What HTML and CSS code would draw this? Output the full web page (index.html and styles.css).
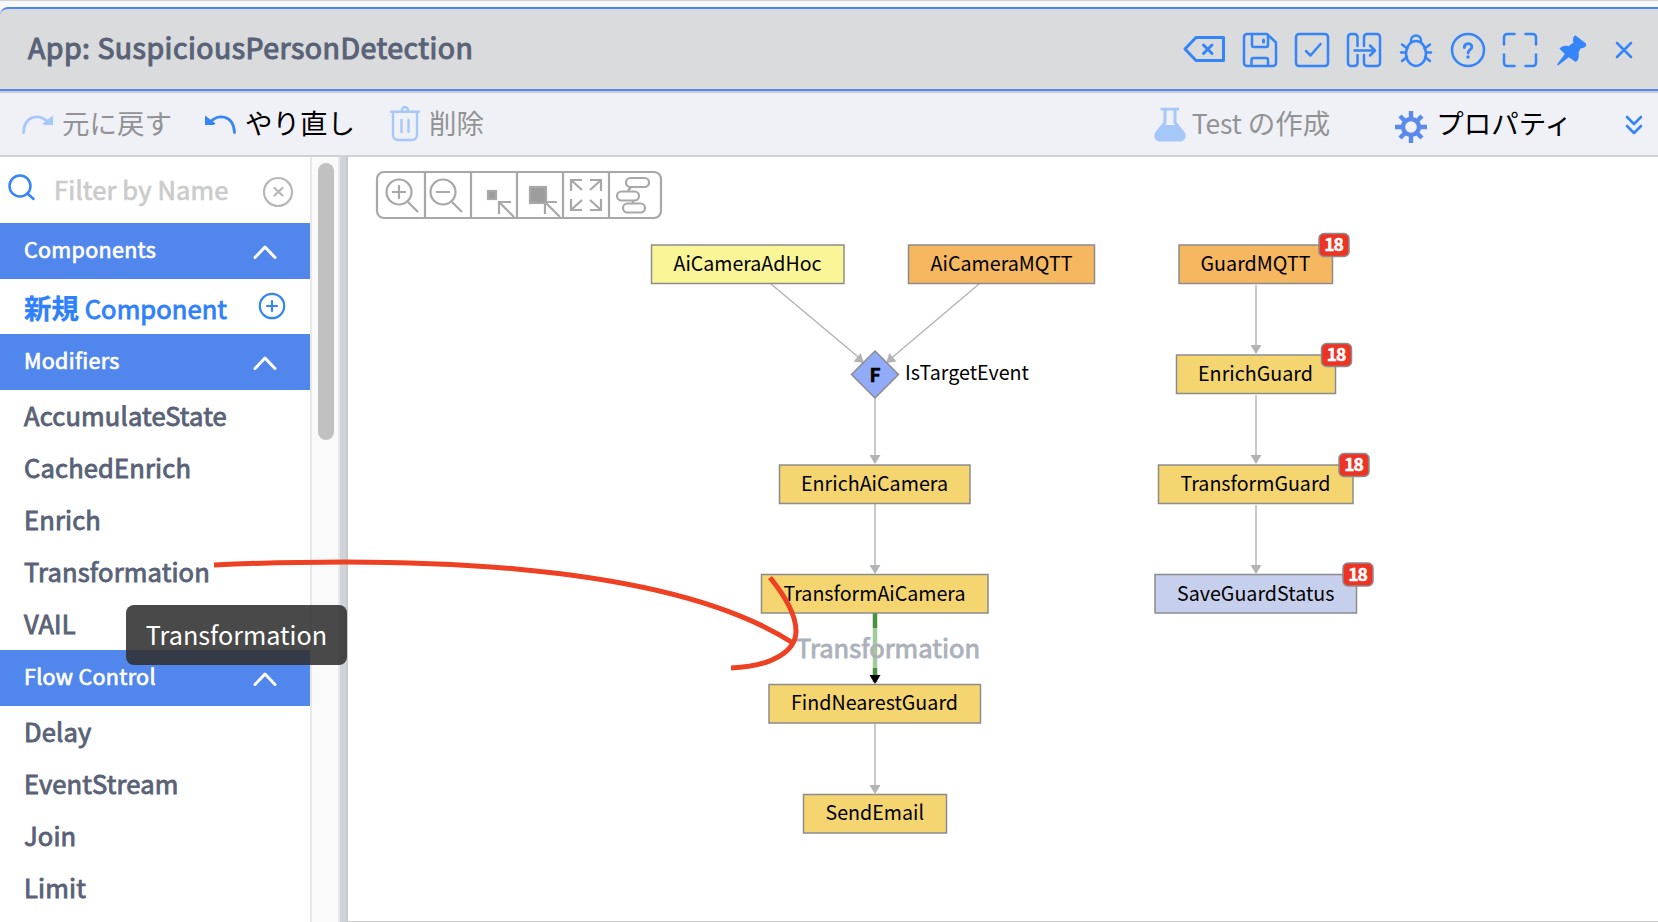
FILE: index.html
```html
<!DOCTYPE html>
<html lang="ja">
<head>
<meta charset="utf-8">
<title>App: SuspiciousPersonDetection</title>
<link rel="stylesheet" href="styles.css">
</head>
<body>
<div class="window">
  <header class="titlebar">
    <h1 class="title">App: SuspiciousPersonDetection</h1>
    <div class="actions">
      <svg class="icon i-del" width="44" height="36" viewBox="0 0 44 36"><path d="M14 6.5H41.5V29.5H14L3 18Z" stroke-width="3"/><path d="M21.500 14L30 22.500M30 14L21.500 22.500" stroke-width="3"/></svg>
      <svg class="icon" width="36" height="36" viewBox="0 0 36 36"><path d="M5 2H25L34 10.500V31a3 3 0 0 1-3 3H5a3 3 0 0 1-3-3V5a3 3 0 0 1 3-3ZM10 2V13a2 2 0 0 0 2 2H24a2 2 0 0 0 2-2V3M9.500 34V28a2 2 0 0 1 2-2H24a2 2 0 0 1 2 2V34"/><path d="M21.500 8V10" stroke-width="3"/></svg>
      <svg class="icon" width="36" height="36" viewBox="0 0 36 36"><rect x="2" y="2" width="32" height="32" rx="3"/><path d="M12 19L16.500 23.500L26.500 12"/></svg>
      <svg class="icon" width="36" height="36" viewBox="0 0 36 36"><path d="M11.500 14V5a3 3 0 0 0-3-3H5a3 3 0 0 0-3 3V31a3 3 0 0 0 3 3H8.500a3 3 0 0 0 3-3V23M18 14V5a3 3 0 0 1 3-3H31a3 3 0 0 1 3 3V31a3 3 0 0 1-3 3H21a3 3 0 0 1-3-3V23M8.500 18.500H28.500M24 13.500L29 18.500L24 23.500"/></svg>
      <svg class="icon" width="36" height="36" viewBox="0 0 36 36"><ellipse cx="18" cy="21.500" rx="10" ry="12.500"/><path d="M13 10V8.500a5 5 0 0 1 10 0V10M3 20.500H8M28 20.500H33M4 12.500L9.500 16.500M32 12.500L26.500 16.500M4 29L9 25M32 29L27 25"/></svg>
      <svg class="icon" width="36" height="36" viewBox="0 0 36 36"><circle cx="18" cy="18" r="16"/><path d="M14.300 15.500c0-5 7.500-5 7.500-.6c0 2.800-3.700 3-3.700 6.100" stroke-width="2.800"/><circle class="fill" cx="18" cy="25" r="1.700"/></svg>
      <svg class="icon" width="36" height="36" viewBox="0 0 36 36"><path d="M12.500 2H5a3 3 0 0 0-3 3V12.500M23.500 2H31a3 3 0 0 1 3 3V12.500M12.500 34H5a3 3 0 0 1-3-3V22.500M23.500 34H31a3 3 0 0 0 3-3V22.500"/></svg>
      <svg class="icon" width="36" height="36" viewBox="0 0 36 36"><path class="fill" d="M21.300 3.300L31.700 11.200C33.500 14.500 29.800 16.300 26.700 16.300L24.500 20.500C25.300 24.500 24.500 28.500 21.800 30L14.800 25.300L4 33.500C3.200 33.300 3 32.500 3.300 32L10.800 22L5.500 16.800C6.500 14.800 10.500 12.800 14.500 14.200L19.500 10.500C18.300 7.500 19 4.500 21.300 3.300Z"/></svg>
      <svg class="icon i-close" width="36" height="36" viewBox="0 0 36 36"><path d="M11 11L25 25M25 11L11 25"/></svg>
    </div>
  </header>

  <div class="toolbar">
    <div class="tool undo off"><svg class="icon" width="36" height="24" viewBox="0 0 36 24"><path d="M3.500 20.500C4.500 2.500 21 1 28.500 11"/><path class="fill" d="M33 3.500V13H24.500L22.500 11.500Z"/></svg><span>元に戻す</span></div>
    <div class="tool redo"><svg class="icon" width="36" height="24" viewBox="0 0 36 24"><path d="M32.500 20.500C31.500 2.500 15 1 7.500 11"/><path class="fill" d="M3 3.500V13H11.500L13.500 11.500Z"/></svg><span>やり直し</span></div>
    <div class="tool trash off"><svg class="icon" width="32" height="36" viewBox="0 0 32 36"><path d="M2 5.800H30M4 7V29a5 5 0 0 0 5 5H23a5 5 0 0 0 5-5V7M13 5V4a3 3 0 0 1 6 0V5M12.500 14V26M19.500 14V26"/></svg><span>削除</span></div>
    <div class="spacer"></div>
    <div class="tool test off"><svg class="icon" width="34" height="36" viewBox="0 0 34 36"><path class="fill" d="M7.500 .8H26V3.500H23.500V15L31.500 25C34.500 30 31.500 34.500 27 34.500H7C2.500 34.500-.5 30 2.500 25L10.500 15V3.500H7.500ZM13.500 3.500V16L12 18H22L20.500 16V3.500Z" fill-rule="evenodd"/></svg><span><span class="latin">Test</span> の作成</span></div>
    <div class="tool props"><svg class="gear" width="34" height="34" viewBox="0 0 34 34"><circle cx="17" cy="17" r="8"/><path d="M17 8V1M17 26V33M8 17H1M26 17H33M10.500 10.500L6 6M23.500 10.500L28 6M10.500 23.500L6 28M23.500 23.500L28 28"/></svg><span>プロパティ</span></div>
    <svg class="icon more" width="20" height="24" viewBox="0 0 20 24"><path d="M3 5L10 12L17 5M3 14L10 21L17 14"/></svg>
  </div>

  <main class="main">
    <aside class="sidebar">
      <div class="filter">
        <svg class="icon search" width="30" height="30" viewBox="0 0 30 30"><circle cx="13" cy="13" r="10.500"/><path d="M20.500 20.500L26.500 26"/></svg>
        <span class="placeholder">Filter by Name</span>
        <svg class="clear" width="32" height="32" viewBox="0 0 32 32"><circle cx="16" cy="16" r="14"/><path d="M12.500 12L20.500 19.500M20.500 12L12.500 19.500"/></svg>
      </div>
      <div class="group"><span>Components</span><svg width="26" height="18" viewBox="0 0 26 18"><path d="M3 14.500L13 4L23 14.500"/></svg></div>
      <div class="new"><span><b>新規</b> <span class="nc">Component</span></span><svg class="icon" width="28" height="28" viewBox="0 0 28 28"><circle cx="14" cy="14" r="12.200"/><path d="M14 9V19M9 14H19"/></svg></div>
      <div class="group"><span>Modifiers</span><svg width="26" height="18" viewBox="0 0 26 18"><path d="M3 14.500L13 4L23 14.500"/></svg></div>
      <ul class="items"><li>AccumulateState</li><li>CachedEnrich</li><li>Enrich</li><li>Transformation</li><li>VAIL</li></ul>
      <div class="group"><span>Flow Control</span><svg width="26" height="18" viewBox="0 0 26 18"><path d="M3 14.500L13 4L23 14.500"/></svg></div>
      <ul class="items"><li>Delay</li><li>EventStream</li><li>Join</li><li>Limit</li></ul>
    </aside>
    <div class="scroll"><div class="thumb"></div></div>
    <div class="splitter"></div>
    <section class="canvas">
      <svg class="graph" width="1310" height="765" viewBox="348 157 1310 765">
        <defs>
          <g id="head"><path d="M-5.500 -9H5.500L0 0Z"/></g>
        </defs>
        <g class="palette">
          <rect x="377" y="172" width="284" height="46" rx="7"/>
          <path d="M425 172V218M471 172V218M517 172V218M563 172V218M609 172V218"/>
          <circle cx="399" cy="192" r="12.500"/><path d="M392 192H406M399 185V199M408 202L418 212"/>
          <circle cx="443" cy="192" r="12.500"/><path d="M436 192H450M452 202L462 212"/>
          <rect class="block" x="488" y="191" width="8" height="8"/><path d="M514 217L499 202M499 214V202H511"/>
          <rect class="block" x="530" y="187" width="16" height="16"/><path d="M560 217L545 202M545 214V202H557"/>
          <path d="M582 190L571 180M571 191V180H582M590 190L601 180M590 180H601V191M582 200L571 210M571 199V210H582M590 200L601 210M601 199V210H590"/>
          <rect x="626" y="178" width="23" height="9" rx="4.500"/><rect x="617" y="191.500" width="22" height="9" rx="4.500"/><rect x="623" y="203.500" width="22" height="9" rx="4.500"/><path d="M631 187L628 191M633 201V203"/>
        </g>
        <g class="edges">
          <path d="M771 284L863 361M979 284L888 361M875 398V463M875 504V573M875 724V793M1256 285V353M1256 395V463M1256 505V573"/>
        </g>
        <g class="heads">
          <use href="#head" transform="translate(864 363) rotate(-50)"/><use href="#head" transform="translate(886 363) rotate(50)"/>
          <use href="#head" x="875" y="464"/><use href="#head" x="875" y="574"/><use href="#head" x="875" y="794"/>
          <use href="#head" x="1256" y="354"/><use href="#head" x="1256" y="464"/><use href="#head" x="1256" y="574"/>
        </g>
        <path class="link" d="M875 613V682"/><use href="#head" x="875" y="684"/>
        <g class="nodes">
          <rect class="yellow" x="651.500" y="245" width="192.500" height="38.500"/>
          <rect class="orange" x="908.500" y="245" width="186" height="38.500"/>
          <path class="blue" d="M875 351L898.500 374.500L875 398L851.500 374.500Z"/>
          <rect class="gold" x="779.500" y="465" width="190.500" height="38.500"/>
          <rect class="gold" x="761.500" y="574.500" width="226.500" height="38.500"/>
          <rect class="gold" x="769" y="684.500" width="211.500" height="38.500"/>
          <rect class="gold" x="803.500" y="794.500" width="143" height="38.500"/>
          <rect class="orange" x="1179" y="245" width="153.500" height="38.500"/>
          <rect class="gold" x="1176.500" y="355" width="159" height="38.500"/>
          <rect class="gold" x="1158.500" y="465" width="194.500" height="38.500"/>
          <rect class="lilac" x="1155" y="574.500" width="201.500" height="38.500"/>
        </g>
        <g class="labels">
          <text x="673.500" y="271" textLength="148" lengthAdjust="spacingAndGlyphs">AiCameraAdHoc</text>
          <text x="930.500" y="271" textLength="142" lengthAdjust="spacingAndGlyphs">AiCameraMQTT</text>
          <text x="905" y="380" textLength="124" lengthAdjust="spacingAndGlyphs">IsTargetEvent</text>
          <text x="801" y="491" textLength="147" lengthAdjust="spacingAndGlyphs">EnrichAiCamera</text>
          <text x="783.500" y="601" textLength="182" lengthAdjust="spacingAndGlyphs">TransformAiCamera</text>
          <text x="791" y="710" textLength="167" lengthAdjust="spacingAndGlyphs">FindNearestGuard</text>
          <text x="825.500" y="820" textLength="98.500" lengthAdjust="spacingAndGlyphs">SendEmail</text>
          <text x="1200.500" y="271" textLength="110" lengthAdjust="spacingAndGlyphs">GuardMQTT</text>
          <text x="1198" y="381" textLength="115" lengthAdjust="spacingAndGlyphs">EnrichGuard</text>
          <text x="1180.500" y="491" textLength="150" lengthAdjust="spacingAndGlyphs">TransformGuard</text>
          <text x="1177" y="601" textLength="157.500" lengthAdjust="spacingAndGlyphs">SaveGuardStatus</text>
          <text class="f" x="869.500" y="381.500">F</text>
        </g>
        <g class="badges">
          <rect x="1319" y="233.500" width="30" height="23" rx="5"/><text x="1333.500" y="251">18</text>
          <rect x="1321.500" y="343.500" width="30" height="23" rx="5"/><text x="1336" y="361">18</text>
          <rect x="1339" y="453.500" width="30" height="23" rx="5"/><text x="1353.500" y="471">18</text>
          <rect x="1343" y="563" width="30" height="23" rx="5"/><text x="1357.500" y="581">18</text>
        </g>
        <rect class="veil" x="796" y="628" width="186" height="40"/>
        <text class="ghost" x="796" y="658" textLength="184" lengthAdjust="spacingAndGlyphs">Transformation</text>
      </svg>
    </section>
  </main>
  <svg class="stroke" width="1658" height="922" viewBox="0 0 1658 922"><path d="M214 565C380 557.500 660 557 793 643M770 577.500C785 596 796 614 796 631C796 650 775 666 731 668"/></svg>
  <div class="tooltip">Transformation</div>
</div>
</body>
</html>
```

FILE: styles.css
```css
* { box-sizing: border-box; }
body { margin: 0; font-family: "Noto Sans CJK JP", "Noto Sans", sans-serif; background: #fff; overflow: hidden; }
.window { position: relative; width: 1658px; height: 922px; display: flex; flex-direction: column; background: #f8f8fb; border-top: 1px solid #d2d3d8; padding-top: 6px; overflow: hidden; }
.titlebar { flex: none; height: 84px; display: flex; align-items: center; justify-content: space-between; background: #dadbdd; border: 2px solid #5187ec; border-left: 0; border-right: 0; border-top-left-radius: 8px; padding: 0 16px 0 28px; }
.title { margin: 0 0 5px; font-size: 28.5px; line-height: 40px; font-weight: 400; color: #596277; -webkit-text-stroke: 1.1px #596277; letter-spacing: .48px; white-space: nowrap; }
.actions { display: flex; align-items: center; gap: 16px; padding-top: 2px; }
.i-del { margin: 0 0 3px 0; }
.icon { flex: none; fill: none; stroke: #3584f8; stroke-width: 2.5; stroke-linecap: round; stroke-linejoin: round; }
.icon .fill { fill: #3584f8; stroke: none; }
.toolbar { flex: none; height: 66px; display: flex; align-items: center; background: #f0f1f7; border-top: 2px solid #c9cbd2; border-bottom: 2px solid #cfd1d8; padding: 0 14px 0 20px; font-size: 27.500px; line-height: 40px; color: #000; }
.tool { display: flex; align-items: center; white-space: nowrap; }
.tool > span { margin-bottom: 4px; }
.tool > svg { stroke-width: 2.800; }
.off { color: #929395; }
.off .icon { stroke: #a5c8f8; }
.off .icon .fill { fill: #a5c8f8; }
.undo { gap: 6px; width: 182px; }
.redo { gap: 7px; width: 187px; }
.trash { gap: 8px; }
.trash > svg { stroke-width: 2.400; }
.spacer { flex: 1; }
.test { gap: 5px; margin-right: 64px; }
.test > svg { margin-top: 2px; }
.latin { font-size: 26.500px; letter-spacing: -.2px; }
.props { gap: 8px; margin-right: 52px; }
.gear { margin-top: 5px; fill: none; stroke: #5a8bec; stroke-width: 4.200; }
.tool > .gear { stroke-width: 4.400; }
.more { stroke-width: 2.600; }
.main { flex: 1; min-height: 0; display: flex; background: #fff; }
.sidebar { width: 310px; overflow: hidden; }
.filter { height: 66px; display: flex; align-items: center; padding: 0 16px 0 7px; }
.search { margin-top: -5px; }
.placeholder { flex: 1; margin: 0 0 4px 17px; font-size: 25.500px; letter-spacing: .15px; color: #cbcbcb; -webkit-text-stroke: .7px #cbcbcb; white-space: nowrap; }
.clear { margin-top: 3px; fill: none; stroke: #b7b7b7; stroke-width: 2.200; stroke-linecap: round; }
.group { height: 56px; display: flex; align-items: center; justify-content: space-between; padding: 0 32px 4px 24px; background: #5187ec; color: #fff; font-size: 21.500px; letter-spacing: .3px; -webkit-text-stroke: .7px #fff; }
.group span { margin-bottom: 1px; }
.group svg { margin-top: 5px; fill: none; stroke: #fff; stroke-width: 3; stroke-linecap: round; stroke-linejoin: round; }
.new { height: 55px; display: flex; align-items: center; justify-content: space-between; padding: 0 24px 0 24px; color: #2f80fb; font-size: 25.500px; white-space: nowrap; }
.new b { font-size: 27.500px; -webkit-text-stroke: .3px #2f80fb; }
.new .icon { margin-top: -1px; stroke-width: 2.200; }
.nc { letter-spacing: .1px; -webkit-text-stroke: .9px #2f80fb; }
.items { margin: 0; padding: 0; list-style: none; }
.items li { height: 52px; line-height: 50px; padding-left: 24px; font-size: 25.500px; letter-spacing: .17px; color: #596277; -webkit-text-stroke: .9px #596277; }
.scroll { width: 30px; background: #fafafa; border-left: 2px solid #e8e8ea; border-right: 2px solid #e8e8ea; padding: 6px 4px 0 6px; }
.thumb { width: 16px; height: 277px; border-radius: 8px; background: #c1c1c1; }
.splitter { width: 8px; background: #d0d3da; border-right: 2px solid #c9c9cb; }
.canvas { flex: 1; border-bottom: 1px solid #c9c9cb; overflow: hidden; }
.graph { display: block; }
.palette { fill: none; stroke: #a8a8a8; stroke-width: 2.200; }
.palette .block { fill: #9d9d9d; }
.edges { stroke: #b3b3b3; stroke-width: 1.400; fill: none; }
.heads { fill: #b3b3b3; }
.link { stroke: #46923f; stroke-width: 4.500; }
.nodes { stroke: #8c8c8c; stroke-width: 1.500; }
.yellow { fill: #faf596; }
.orange { fill: #f5b75f; }
.blue { fill: #92abf8; }
.gold { fill: #f4d570; }
.lilac { fill: #c6cfeb; }
.labels { font-size: 20.500px; fill: #000; }
.f { font-weight: 700; font-size: 19px; stroke: #000; stroke-width: .5px; }
.badges rect { fill: #ec3324; stroke: #8c8c8c; stroke-width: 1.500; }
.badges text { font-size: 17.500px; font-weight: 700; fill: #fff; stroke: #fff; stroke-width: .5px; text-anchor: middle; letter-spacing: -1px; }
.veil { fill: #fff; opacity: .5; }
.ghost { font-size: 25.500px; fill: #acb1bb; stroke: #acb1bb; stroke-width: .9px; }
.stroke { position: absolute; left: 0; top: -1px; fill: none; stroke: #ee4023; stroke-width: 5; pointer-events: none; }
.tooltip { position: absolute; left: 126px; top: 604px; width: 221px; height: 60px; border-radius: 8px; background: rgba(48,48,48,.88); color: #fff; font-size: 25.200px; line-height: 58px; text-align: center; }
```
